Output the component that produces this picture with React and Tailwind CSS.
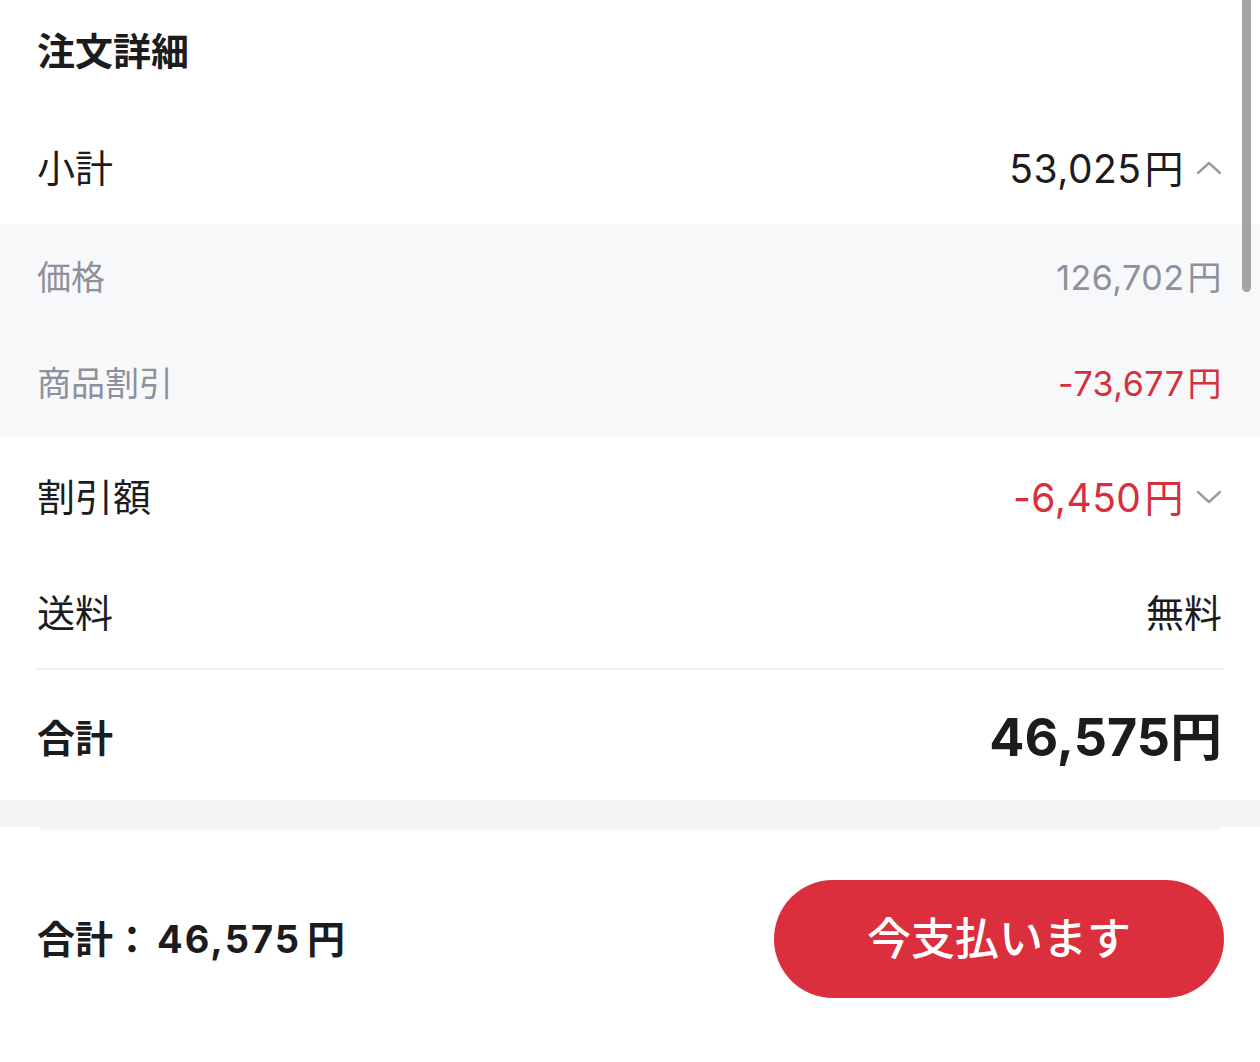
import React from 'react';

function Chevron({ up }) {
  return (
    <svg width="26" height="16" viewBox="0 0 26 16" fill="none" className="ml-3">
      <polyline
        points={up ? '2,13 13,3 24,13' : '2,3 13,13 24,3'}
        stroke="#9a9ba6"
        strokeWidth="2.4"
        strokeLinecap="round"
        strokeLinejoin="round"
      />
    </svg>
  );
}

// 数字はInter、漢字はNoto Sans CJK JPにフォールバック
const font = { fontFamily: 'Inter, "Noto Sans CJK JP", sans-serif' };

export default function App() {
  return (
    <div className="relative w-[1260px] h-[1062px] bg-white overflow-hidden text-[#1c1c1e]" style={font}>
      {/* 注文詳細 */}
      <div className="h-[112px] px-[37px] flex items-center pb-[10px]">
        <h1 className="text-[38px] font-bold leading-none">注文詳細</h1>
      </div>

      <div className="h-[112px] px-[37px] pr-[38px] flex items-center justify-between">
        <span className="text-[38px] leading-none">小計</span>
        <div className="flex items-center">
          <span className="text-[39px] leading-none tracking-[0.5px]">53,025<span className="ml-[3px]">円</span></span>
          <Chevron up />
        </div>
      </div>

      {/* 内訳 */}
      <div className="bg-[#f7f8fa] text-[#8e909c]">
        <div className="h-[107px] px-[37px] pr-[38px] flex items-center justify-between">
          <span className="text-[34px] leading-none">価格</span>
          <span className="text-[34px] leading-none tracking-[0.5px]">126,702<span className="ml-[3px]">円</span></span>
        </div>
        <div className="h-[106px] px-[37px] pr-[38px] flex items-center justify-between">
          <span className="text-[34px] leading-none">商品割引</span>
          <span className="text-[34px] leading-none tracking-[0.5px] text-[#d6303e]">-73,677<span className="ml-[3px]">円</span></span>
        </div>
      </div>

      <div className="h-[120px] px-[37px] pr-[38px] flex items-center justify-between">
        <span className="text-[38px] leading-none">割引額</span>
        <div className="flex items-center">
          <span className="text-[39px] leading-none tracking-[0.5px] text-[#d6303e]">-6,450<span className="ml-[3px]">円</span></span>
          <Chevron />
        </div>
      </div>

      <div className="h-[111px] px-[37px] pr-[38px] flex items-center justify-between">
        <span className="text-[38px] leading-none">送料</span>
        <span className="text-[38px] leading-none">無料</span>
      </div>

      <div className="mx-[36px] h-[2px] bg-[#f1f1f1]" />

      <div className="h-[130px] px-[37px] pr-[38px] flex items-center justify-between pt-[6px]">
        <span className="text-[38px] font-bold leading-none">合計</span>
        <span className="text-[52px] font-bold leading-none">46,575円</span>
      </div>

      <div className="h-[27px] bg-[#f4f4f4]" />
      <div className="mx-[40px] h-[3px] bg-[#f6f6f6]" />

      {/* 支払いバー */}
      <div className="h-[232px] px-[37px] pr-[36px] flex items-start justify-between pt-[50px]">
        <div className="h-[118px] flex items-center">
          <span className="text-[38px] font-bold leading-none">合計：<span className="ml-[6px] tracking-[2px]">46,575</span><span className="ml-[6px]">円</span></span>
        </div>
        <button className="w-[450px] h-[118px] rounded-full bg-[#dc2f3d] text-white text-[44px] font-medium leading-none">
          今支払います
        </button>
      </div>

      {/* scrollbar */}
      <div className="absolute right-[9px] top-0 w-[9px] h-[292px] rounded-b-full bg-[#a4a4a4]" />
    </div>
  );
}
